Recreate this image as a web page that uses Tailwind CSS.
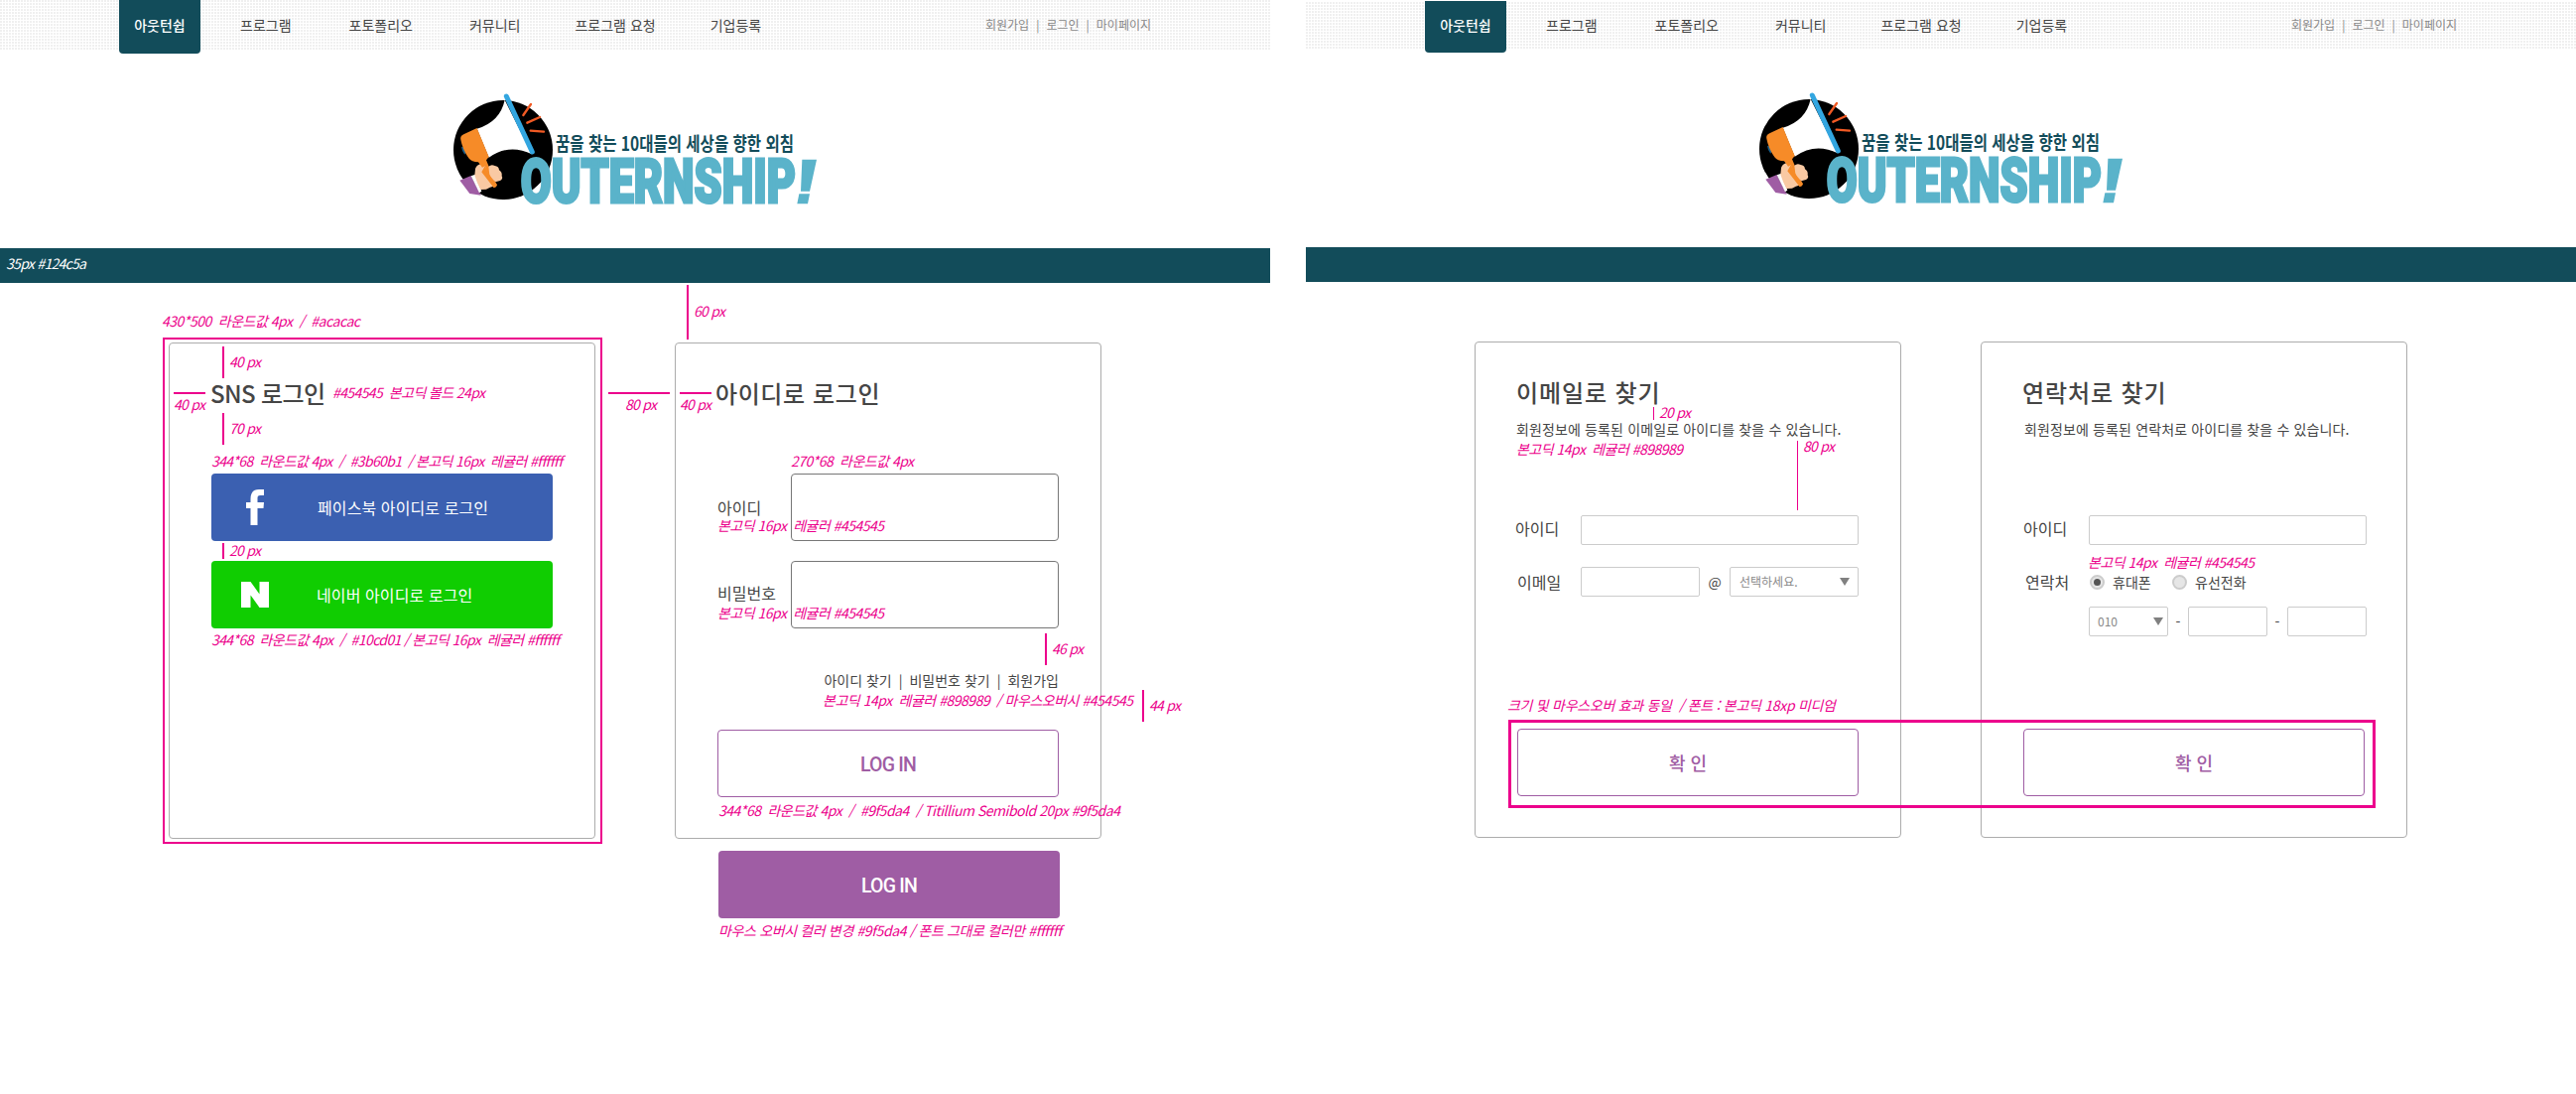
<!DOCTYPE html>
<html lang="ko">
<head>
<meta charset="utf-8">
<title>OUTERNSHIP</title>
<script src="https://cdn.jsdelivr.net/npm/@tailwindcss/browser@4"></script>
</head>
<body class="bg-white">
<svg class="hidden">
  <symbol id="logo" viewBox="0 0 1260 420">
    <clipPath id="disc"><circle cx="231" cy="213" r="150"/></clipPath>
    <circle cx="231" cy="213" r="150" fill="#000"/>
    <path d="M105 205q2 14 10 22l4-8-10-16z" fill="#1c5f8a"/>
    <path d="M236 62Q222 128 152 149L188 236Q250 192 318 226Z" fill="#fff"/>
    <path d="M241 51L319 219" stroke="#33a6e0" stroke-width="15" stroke-linecap="round"/>
    <path d="M315 75L292 108M342 114L304 131M354 158L314 155" stroke="#f15a24" stroke-width="7" stroke-linecap="round"/>
    <path clip-path="url(#disc)" d="M100 305L134 291L164 350L130 345Z" fill="#9f5da4"/>
    <path d="M134 292L147 287L166 338L159 343Z" fill="#fff"/>
    <path d="M147 270Q150 260 162 256L176 248L206 322Q190 326 180 332L163 333Q152 312 145 290Z" fill="#f9c9a3"/>
    <path d="M103 182Q100 172 112 166L152 147L188 234L180 244L212 320Q210 328 202 326L172 272L165 262L156 250Q136 250 127 238Q108 210 103 182Z" fill="#f68b28"/>
    <path d="M187 263Q196 255 206 261Q218 262 219 274Q229 280 227 292Q232 300 222 306L208 310L196 300L190 288Z" fill="#f9c9a3"/>
    <path d="M162 270L176 262L200 318L190 322Z" fill="#f9c9a3"/>
    <path d="M176 262L192 292L213 318Q210 328 202 326L166 280Z" fill="#f68b28"/>
    <text x="390" y="216" textLength="720" lengthAdjust="spacingAndGlyphs" font-size="58" fill="#124c5a" class="font-['Noto_Sans_CJK_KR',sans-serif] font-bold">꿈을 찾는 10대들의 세상을 향한 외침</text>
    <text x="284" y="372" textLength="832" lengthAdjust="spacingAndGlyphs" font-size="181" fill="#5ab3ca" stroke="#5ab3ca" stroke-width="9" class="font-[Roboto,sans-serif] font-black">OUTERNSHIP</text>
    <path d="M1135 242L1179 242L1158 338L1131 338ZM1126 346L1158 346L1152 376L1120 376Z" fill="#5ab3ca"/>
  </symbol>
</svg>

<div class="relative flex h-[1102px] w-[2596px] gap-9 overflow-hidden bg-white font-['Noto_Sans_CJK_KR',sans-serif] text-[#454545]">

  <!-- Login page -->
  <section class="w-[1280px]">
    <header class="flex h-[50px] bg-white bg-[conic-gradient(from_270deg_at_2px_2px,#f0f0f0_90deg,transparent_0)] bg-[length:3px_3px] pl-[120px] text-sm">
      <a class="h-[54px] w-[82px] rounded-b bg-[#124c5a] text-center leading-[51px] font-medium text-white">아웃턴쉽</a>
      <nav class="flex w-[791px] gap-[57px] pl-10 leading-[51px]">
        <a>프로그램</a><a class="ml-px">포토폴리오</a><a>커뮤니티</a><a class="-ml-[2px]">프로그램 요청</a><a class="-ml-[2px]">기업등록</a>
      </nav>
      <div class="flex gap-[7px] text-xs leading-[49px] text-[#888]"><a>회원가입</a><i class="not-italic">|</i><a>로그인</a><i class="not-italic">|</i><a>마이페이지</a></div>
    </header>
    <div class="h-[200px] pt-[30px] pl-[430px]"><svg class="h-[140px] w-[420px]"><use href="#logo"/></svg></div>
    <div class="h-[35px] bg-[#124c5a]"></div>

    <main class="flex gap-20 pt-[60px] pl-[170px]">
      <div class="h-[500px] w-[430px] rounded border border-[#acacac] px-[42px] pt-[31px]">
        <h2 class="-ml-px h-[100px] text-2xl leading-[38px] font-medium tracking-[-0.6px]">SNS 로그인</h2>
        <button class="flex h-[68px] w-[344px] items-center rounded bg-[#3b60b1] text-base tracking-[0.1px] text-white">
          <svg class="ml-[35px] h-9 w-[18px]" viewBox="0 0 18 36" fill="#fff"><path d="M4.500 36V19H0V13H4.500V9.500C4.500 3 7.500 0 13 0H18V6H14.500C12 6 11.500 7 11.500 9V13H18L17.500 19H11.500V36Z"/></svg>
          <span class="ml-[54px]">페이스북 아이디로 로그인</span>
        </button>
        <button class="mt-5 flex h-[68px] w-[344px] items-center rounded bg-[#10cd01] text-base tracking-[0.1px] text-white">
          <svg class="ml-[30px] h-[26px] w-7" viewBox="0 0 28 26" fill="#fff"><path d="M0 0H9.500L18.500 12.500V0H28V26H18.500L9.500 13.500V26H0Z"/></svg>
          <span class="ml-[48px]">네이버 아이디로 로그인</span>
        </button>
      </div>

      <div class="h-[500px] w-[430px] rounded border border-[#acacac] px-[42px] pt-[31px]">
        <h2 class="-ml-[2px] h-[100px] text-2xl leading-[38px] font-medium tracking-[0.6px]">아이디로 로그인</h2>
        <label class="flex w-[344px] items-center justify-between">아이디<span class="h-[68px] w-[270px] rounded border border-[#777]"></span></label>
        <label class="mt-5 flex w-[344px] items-center justify-between"><span class="-mt-1">비밀번호</span><span class="h-[68px] w-[270px] rounded border border-[#777]"></span></label>
        <div class="flex h-[102px] w-[344px] justify-end gap-[7px] pt-[42px] text-sm"><a>아이디 찾기</a><i class="not-italic">|</i><a>비밀번호 찾기</a><i class="not-italic">|</i><a>회원가입</a></div>
        <button class="flex h-[68px] w-[344px] items-center justify-center rounded border border-[#9f5da4] pt-[3px] font-[Roboto,sans-serif] text-[19.5px] font-medium tracking-[-0.8px] text-[#9f5da4]">LOG IN</button>
        <button class="mt-[54px] ml-px flex h-[68px] w-[344px] items-center justify-center rounded bg-[#9f5da4] pt-[3px] font-[Roboto,sans-serif] text-[19.5px] font-medium tracking-[-0.8px] text-white">LOG IN</button>
      </div>
    </main>
  </section>

  <!-- Find-account page -->
  <section class="w-[1280px] pt-px">
    <header class="flex h-[48px] bg-[conic-gradient(from_270deg_at_2px_2px,#f0f0f0_90deg,transparent_0)] bg-[length:3px_3px] bg-[position:0_1px] pl-[120px] text-sm">
      <a class="h-[52px] w-[82px] rounded-b bg-[#124c5a] text-center leading-[49px] font-medium text-white">아웃턴쉽</a>
      <nav class="flex w-[791px] gap-[57px] pl-10 leading-[49px]">
        <a>프로그램</a><a class="ml-px">포토폴리오</a><a>커뮤니티</a><a class="-ml-[2px]">프로그램 요청</a><a class="-ml-[2px]">기업등록</a>
      </nav>
      <div class="flex gap-[7px] text-xs leading-[47px] text-[#888]"><a>회원가입</a><i class="not-italic">|</i><a>로그인</a><i class="not-italic">|</i><a>마이페이지</a></div>
    </header>
    <div class="h-[200px] pt-[30px] pl-[430px]"><svg class="h-[140px] w-[420px]"><use href="#logo"/></svg></div>
    <div class="h-[35px] bg-[#124c5a]"></div>

    <main class="flex gap-20 pt-[60px] pl-[170px]">
      <div class="h-[500px] w-[430px] rounded border border-[#acacac] px-[42px] pt-[31px]">
        <h2 class="-ml-px text-2xl leading-[37px] font-medium tracking-[0.9px]">이메일로 찾기</h2>
        <p class="-ml-px h-[106px] pt-[9px] text-sm tracking-[0.13px] whitespace-nowrap">회원정보에 등록된 이메일로 아이디를 찾을 수 있습니다.</p>
        <div class="flex h-[30px] w-[344px] items-center"><span class="-mt-1 -ml-[2px] w-[66px]">아이디</span><span class="h-[30px] w-[280px] rounded-xs border border-[#ccc]"></span></div>
        <div class="mt-[22px] flex h-[30px] w-[344px] items-center"><span class="w-16">이메일</span><span class="h-[30px] w-[120px] rounded-xs border border-[#ccc]"></span><span class="w-[30px] text-center text-sm">@</span>
          <span class="flex h-[30px] w-[130px] items-center justify-between rounded-xs border border-[#ccc] pr-2 pl-[9px] text-xs text-[#888]">선택하세요.<svg class="h-2 w-[10px]" viewBox="0 0 10 8"><path d="M0 0H10L5 8Z" fill="#808080"/></svg></span>
        </div>
        <button class="mt-[133px] h-[68px] w-[344px] rounded border border-[#9f5da4] text-lg font-medium text-[#9f5da4]">확 인</button>
      </div>

      <div class="h-[500px] w-[430px] rounded border border-[#acacac] px-[42px] pt-[31px]">
        <h2 class="-ml-px text-2xl leading-[37px] font-medium tracking-[0.9px]">연락처로 찾기</h2>
        <p class="ml-px h-[106px] pt-[9px] text-sm tracking-[0.13px] whitespace-nowrap">회원정보에 등록된 연락처로 아이디를 찾을 수 있습니다.</p>
        <div class="ml-[2px] flex h-[30px] w-[344px] items-center"><span class="-mt-1 -ml-[2px] w-[66px]">아이디</span><span class="h-[30px] w-[280px] rounded-xs border border-[#ccc]"></span></div>
        <div class="mt-[22px] ml-[2px] flex h-[30px] w-[344px] items-center text-sm"><span class="w-[65px] text-base">연락처</span>
          <span class="flex size-[15px] items-center justify-center rounded-full border-2 border-[#ccc] bg-[#e6e6e6]"><span class="size-[7px] rounded-full bg-[#555]"></span></span><span class="ml-2 w-[60px]">휴대폰</span>
          <span class="size-[15px] rounded-full border-2 border-[#ccc] bg-[#e6e6e6]"></span><span class="ml-2">유선전화</span>
        </div>
        <div class="mt-[10px] ml-[66px] flex h-[30px] w-[280px] items-center text-sm">
          <span class="flex h-[30px] w-20 items-center justify-between rounded-xs border border-[#ccc] pr-1 pl-2 text-xs text-[#888]">010<svg class="h-2 w-[10px]" viewBox="0 0 10 8"><path d="M0 0H10L5 8Z" fill="#808080"/></svg></span>
          <span class="w-5 text-center">-</span><span class="h-[30px] w-20 rounded-xs border border-[#ccc]"></span><span class="w-5 text-center">-</span><span class="h-[30px] w-20 rounded-xs border border-[#ccc]"></span>
        </div>
        <button class="mt-[93px] h-[68px] w-[344px] rounded border border-[#9f5da4] text-lg font-medium text-[#9f5da4]">확 인</button>
      </div>
    </main>
  </section>

  <!-- Redline annotations over both pages -->
  <svg class="absolute inset-0 h-[1102px] w-[2596px] text-sm font-normal italic" viewBox="0 0 2596 1102" fill="#ec008c">
    <g fill="none" stroke="#ec008c" stroke-width="2">
      <rect x="165" y="341" width="441" height="508"/>
      <path d="M225 349V381M225 416V448M225 547V563M175 396H207M613 396H675M685 396H717M693 287V342M1054 638V670M1152 695V727"/>
      <path stroke-width="1" d="M1666.500 410V423M1811.500 444V514"/>
      <rect stroke-width="3" x="1521.500" y="726.500" width="871" height="86"/>
    </g>
    <text x="6" y="271" textLength="81" fill="#fff">35px #124c5a</text>
    <text x="163" y="329" textLength="200">430*500&#160; 라운드값 4px&#160; /&#160; #acacac</text>
    <text x="231" y="370" textLength="32">40 px</text>
    <text x="175" y="413" textLength="32">40 px</text>
    <text x="335" y="401" textLength="154">#454545&#160; 본고딕 볼드 24px</text>
    <text x="231" y="437" textLength="32">70 px</text>
    <text x="213" y="470" textLength="354">344*68&#160; 라운드값 4px&#160; /&#160; #3b60b1&#160; / 본고딕 16px&#160; 레귤러 #ffffff</text>
    <text x="231" y="560" textLength="32">20 px</text>
    <text x="213" y="650" textLength="351">344*68&#160; 라운드값 4px&#160; /&#160; #10cd01 / 본고딕 16px&#160; 레귤러 #ffffff</text>
    <text x="699" y="319" textLength="32">60 px</text>
    <text x="630" y="413" textLength="32">80 px</text>
    <text x="685" y="413" textLength="32">40 px</text>
    <text x="797" y="470" textLength="124">270*68&#160; 라운드값 4px</text>
    <text x="723" y="535" textLength="168">본고딕 16px&#160; 레귤러 #454545</text>
    <text x="723" y="623" textLength="168">본고딕 16px&#160; 레귤러 #454545</text>
    <text x="1060" y="659" textLength="32">46 px</text>
    <text x="829" y="711" textLength="313">본고딕 14px&#160; 레귤러 #898989&#160; / 마우스오버시 #454545</text>
    <text x="1158" y="716" textLength="32">44 px</text>
    <text x="724" y="822" textLength="405">344*68&#160; 라운드값 4px&#160; /&#160; #9f5da4&#160; / Titillium Semibold 20px #9f5da4</text>
    <text x="724" y="943" textLength="346">마우스 오버시 컬러 변경 #9f5da4 / 폰트 그대로 컬러만 #ffffff</text>
    <text x="1672" y="421" textLength="32">20 px</text>
    <text x="1817" y="455" textLength="32">80 px</text>
    <text x="1528" y="458" textLength="168">본고딕 14px&#160; 레귤러 #898989</text>
    <text x="2104" y="572" textLength="168">본고딕 14px&#160; 레귤러 #454545</text>
    <text x="1519" y="716" textLength="331">크기 및 마우스오버 효과 동일&#160; / 폰트 : 본고딕 18xp 미디엄</text>
  </svg>
</div>
</body>
</html>
